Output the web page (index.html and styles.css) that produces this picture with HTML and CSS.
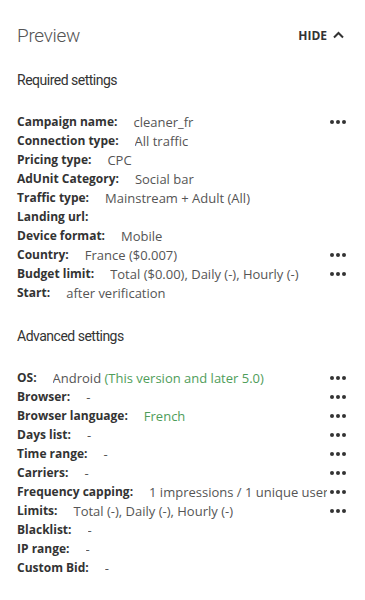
FILE: index.html
```html
<!DOCTYPE html>
<html lang="en">
<head>
    <meta charset="UTF-8">
    <meta name="viewport" content="width=device-width, initial-scale=1.0">
    <title>Preview</title>
    <link rel="stylesheet" href="styles.css">
</head>
<body>
    <div class="preview">
        <div class="preview-header">
            <h1>Preview</h1>
            <button class="hide-btn">HIDE
                <svg width="11" height="8" viewBox="0 0 11 8"><path d="M1 6.5 L5.5 2 L10 6.5" fill="none" stroke="#333" stroke-width="2"/></svg>
            </button>
        </div>

        <h2>Required settings</h2>
        <ul class="settings">
            <li><b>Campaign name:</b><span class="value">cleaner_fr</span><span class="dots"><i></i><i></i><i></i></span></li>
            <li><b>Connection type:</b><span class="value">All traffic</span></li>
            <li><b>Pricing type:</b><span class="value">CPC</span></li>
            <li><b>AdUnit Category:</b><span class="value">Social bar</span></li>
            <li><b>Traffic type:</b><span class="value">Mainstream + Adult (All)</span></li>
            <li><b>Landing url:</b><span class="value"></span></li>
            <li><b>Device format:</b><span class="value">Mobile</span></li>
            <li><b>Country:</b><span class="value">France ($0.007)</span><span class="dots"><i></i><i></i><i></i></span></li>
            <li><b>Budget limit:</b><span class="value">Total ($0.00), Daily (-), Hourly (-)</span><span class="dots"><i></i><i></i><i></i></span></li>
            <li><b>Start:</b><span class="value">after verification</span></li>
        </ul>

        <h2>Advanced settings</h2>
        <ul class="settings">
            <li><b>OS:</b><span class="value">Android <span class="green">(This version and later 5.0)</span></span><span class="dots"><i></i><i></i><i></i></span></li>
            <li><b>Browser:</b><span class="value">-</span><span class="dots"><i></i><i></i><i></i></span></li>
            <li><b>Browser language:</b><span class="value green">French</span><span class="dots"><i></i><i></i><i></i></span></li>
            <li><b>Days list:</b><span class="value">-</span><span class="dots"><i></i><i></i><i></i></span></li>
            <li><b>Time range:</b><span class="value">-</span><span class="dots"><i></i><i></i><i></i></span></li>
            <li><b>Carriers:</b><span class="value">-</span><span class="dots"><i></i><i></i><i></i></span></li>
            <li><b>Frequency capping:</b><span class="value">1 impressions / 1 unique user</span><span class="dots"><i></i><i></i><i></i></span></li>
            <li><b>Limits:</b><span class="value">Total (-), Daily (-), Hourly (-)</span><span class="dots"><i></i><i></i><i></i></span></li>
            <li><b>Blacklist:</b><span class="value">-</span></li>
            <li><b>IP range:</b><span class="value">-</span></li>
            <li><b>Custom Bid:</b><span class="value">-</span></li>
        </ul>
    </div>
</body>
</html>
```

FILE: styles.css
```css
body {
    font-family: "Open Sans", Arial, sans-serif;
    background-color: #fff;
    margin: 0;
    padding: 0;
    color: #333;
}

.preview {
    padding: 21px 20px 0 17px;
}

.preview-header {
    display: flex;
    justify-content: space-between;
    align-items: center;
    height: 28px;
}

h1 {
    margin: 0;
    font-family: Roboto, sans-serif;
    font-size: 19px;
    font-weight: 300;
    letter-spacing: -0.3px;
    color: #555;
}

.hide-btn {
    border: none;
    background: none;
    padding: 0;
    margin-right: 1px;
    font-family: inherit;
    font-size: 12px;
    font-weight: 700;
    color: #333;
    display: flex;
    align-items: center;
    gap: 6px;
    cursor: pointer;
}

h2 {
    margin: 21px 0 0;
    font-family: Roboto, sans-serif;
    font-size: 14px;
    font-weight: 400;
    letter-spacing: -0.5px;
    color: #333;
    line-height: 20px;
}

.settings {
    list-style: none;
    margin: 22px 0 24px;
    padding: 0;
    font-size: 12px;
}

.settings li {
    display: flex;
    align-items: center;
    height: 19px;
    white-space: nowrap;
}

.settings b {
    font-weight: 700;
    color: #333;
}

.value {
    flex: 1;
    overflow: hidden;
    margin-left: 16px;
    font-size: 13px;
    color: #555;
}

.green {
    color: #4f9d5a;
}

.dots {
    display: flex;
    gap: 2px;
    margin-left: 3px;
    margin-right: -1px;
}

.dots i {
    width: 4px;
    height: 4px;
    border-radius: 50%;
    background-color: #333;
}
```
